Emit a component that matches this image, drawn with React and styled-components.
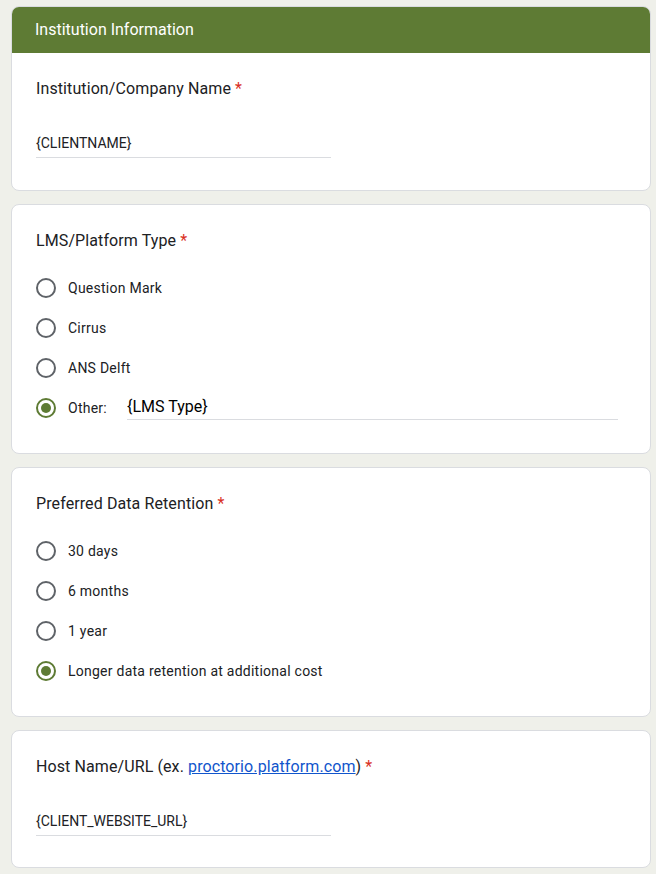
import React from 'react';
import styled, { createGlobalStyle } from 'styled-components';

const GlobalStyle = createGlobalStyle`
  html, body {
    margin: 0;
    padding: 0;
    background: #eff0ea;
    font-family: Roboto, "Liberation Sans", Arial, sans-serif;
    color: #202124;
  }
`;

const Page = styled.div`
  display: flex;
  flex-direction: column;
  gap: 13px;
  padding: 6px 5px 9px 11px;
  width: 640px;
`;

const Card = styled.section`
  background: #fff;
  border: 1px solid #dadce0;
  border-radius: 8px;
  overflow: hidden;
  box-sizing: border-box;
`;

const Header = styled.div`
  background: #5e7b34;
  color: #fff;
  font-size: 16px;
  height: 47px;
  display: flex;
  align-items: center;
  padding: 0 24px;
  margin: -1px -1px 0;
`;

const Body = styled.div`
  padding: 24px 24px ${(p) => p.$bottom || 24}px;
`;

const Title = styled.div`
  font-size: 16px;
  line-height: 24px;
  letter-spacing: 0.1px;
`;

const Star = styled.span`
  color: #d93025;
  margin-left: 4px;
`;

const Link = styled.a`
  color: #1155cc;
  text-decoration: underline;
`;

const TextInput = styled.div`
  margin-top: 32px;
  width: 295px;
  font-size: 14px;
  padding-bottom: 4px;
  line-height: 20px;
  border-bottom: 1px solid #dadce0;
`;

const Options = styled.div`
  display: flex;
  flex-direction: column;
  margin-top: 15px;
`;

const Option = styled.label`
  display: flex;
  align-items: center;
  height: 40px;
  font-size: 14px;
  letter-spacing: 0.25px;
`;

const Radio = styled.span`
  width: 20px;
  height: 20px;
  border-radius: 50%;
  box-sizing: border-box;
  border: 2px solid ${(p) => (p.$checked ? '#5e7b34' : '#5f6368')};
  display: flex;
  align-items: center;
  justify-content: center;
  margin-right: 12px;
  flex-shrink: 0;
  &::after {
    content: '';
    width: 10px;
    height: 10px;
    border-radius: 50%;
    background: #5e7b34;
    display: ${(p) => (p.$checked ? 'block' : 'none')};
  }
`;

const OtherLabel = styled.span`
  width: 59px;
`;

const OtherInput = styled.span`
  flex: 1;
  font-size: 16px;
  line-height: 22px;
  letter-spacing: 0;
  color: #000;
  margin-right: 8px;
  padding-bottom: 1px;
  border-bottom: 1px solid #dadce0;
`;

const RadioQuestion = ({ title, options, checked, other }) => (
  <Card>
    <Body $bottom={25}>
      <Title>
        {title}
        <Star>*</Star>
      </Title>
      <Options>
        {options.map((o) => (
          <Option key={o}>
            <Radio $checked={o === checked} />
            {o}
          </Option>
        ))}
        {other && (
          <Option>
            <Radio $checked />
            <OtherLabel>Other:</OtherLabel>
            <OtherInput>{other}</OtherInput>
          </Option>
        )}
      </Options>
    </Body>
  </Card>
);

export default function App() {
  return (
    <>
      <GlobalStyle />
      <Page>
        <Card>
          <Header>Institution Information</Header>
          <Body $bottom={32}>
            <Title>
              Institution/Company Name<Star>*</Star>
            </Title>
            <TextInput>{'{CLIENTNAME}'}</TextInput>
          </Body>
        </Card>
        <RadioQuestion
          title="LMS/Platform Type"
          options={['Question Mark', 'Cirrus', 'ANS Delft']}
          other="{LMS Type}"
        />
        <RadioQuestion
          title="Preferred Data Retention"
          options={['30 days', '6 months', '1 year', 'Longer data retention at additional cost']}
          checked="Longer data retention at additional cost"
        />
        <Card>
          <Body $bottom={31}>
            <Title>
              Host Name/URL (ex. <Link href="#">proctorio.platform.com</Link>)<Star>*</Star>
            </Title>
            <TextInput>{'{CLIENT_WEBSITE_URL}'}</TextInput>
          </Body>
        </Card>
      </Page>
    </>
  );
}
